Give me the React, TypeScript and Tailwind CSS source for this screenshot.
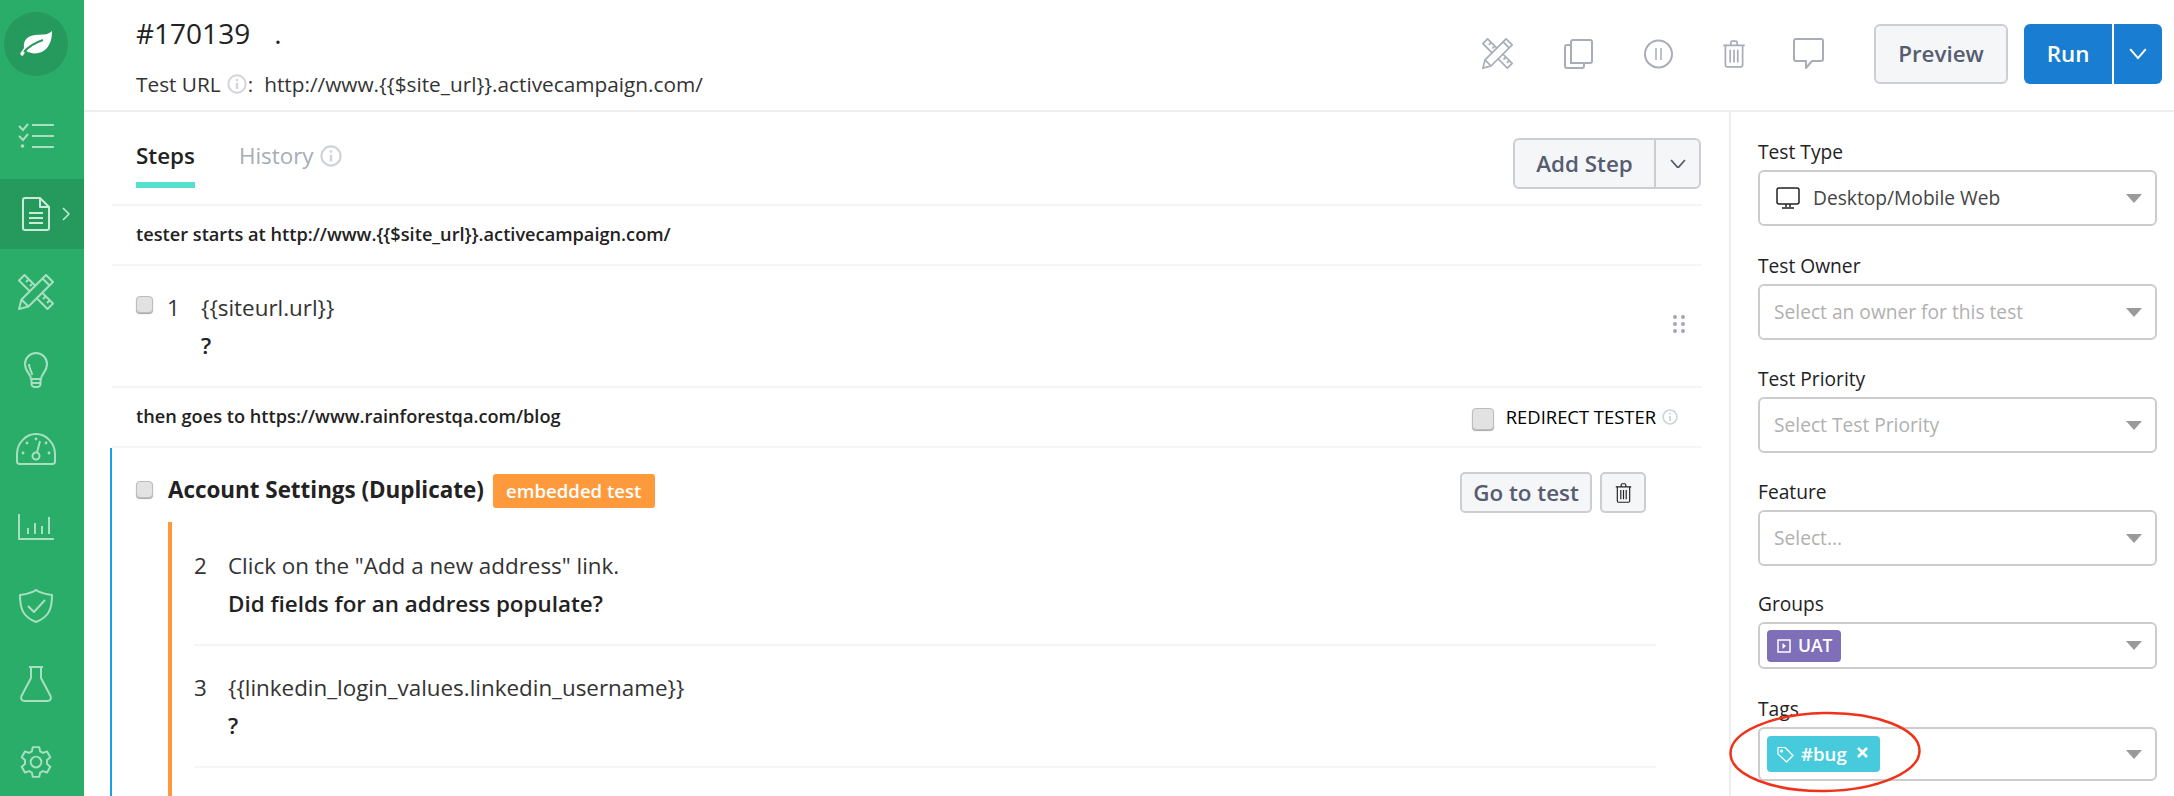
import type { ReactNode } from "react";

function InfoIcon({ size = 18 }: { size?: number }) {
  return (
    <svg width={size} height={size} viewBox="0 0 18 18" fill="none" className="shrink-0">
      <circle cx="9" cy="9" r="7.8" stroke="#d0d3da" strokeWidth="1.8" />
      <circle cx="9" cy="5.4" r="1.1" fill="#d0d3da" />
      <path d="M9 8v5.5" stroke="#d0d3da" strokeWidth="2" />
    </svg>
  );
}

function ToolsIcon({ size, color }: { size: number; color: string }) {
  return (
    <svg width={size} height={size} viewBox="0 0 36 36" fill="none" stroke={color} strokeWidth="2" strokeLinejoin="round">
      <path d="M17.25 11.75L6.5 1L1 6.5L11.75 17.25" />
      <path d="M24.25 18.75L35 29.5L29.5 35L18.75 24.25" />
      <path d="M28 1L35 8L10.5 32.5L1 35L3.5 25.5Z" />
      <path d="M24.5 4.5L31.5 11.5M3.5 25.5L10.5 32.5" />
      <path d="M8 8l3-3M12 12l2-2M25 25l3-3M29 29l3-3" />
    </svg>
  );
}

function TrashIcon({ w, h, color, sw = 2 }: { w: number; h: number; color: string; sw?: number }) {
  return (
    <svg width={w} height={h} viewBox="0 0 22 26" fill="none" stroke={color} strokeWidth={sw} strokeLinejoin="round">
      <path d="M1 5h20M8 5V2.500C8 1.700 8.700 1 9.500 1h3c.8 0 1.500.7 1.500 1.500V5" />
      <path d="M3 5v18.500C3 24.400 3.700 25 4.500 25h13c.8 0 1.500-.6 1.500-1.500V5" />
      <path d="M7.500 9v12M11 9v12M14.500 9v12" />
    </svg>
  );
}

function Caret() {
  return (
    <svg width="16" height="9" viewBox="0 0 16 9" className="shrink-0">
      <path d="M0 0h16L8 9z" fill="#9a9a9a" />
    </svg>
  );
}

function Chevron({ color, size = 16 }: { color: string; size?: number }) {
  return (
    <svg width={size} height={size * 0.62} viewBox="0 0 16 10" fill="none" stroke={color} strokeWidth="1.800">
      <path d="M1 1l7 8 7-8" />
    </svg>
  );
}

function Checkbox({ size = 17 }: { size?: number }) {
  return (
    <span
      className="block shrink-0 rounded-[4px] border border-[#bdbdbd] bg-[#e2e2e2] shadow-[0_1px_1px_rgba(0,0,0,0.35)]"
      style={{ width: size, height: size }}
    />
  );
}

const navIcon = "#a9dfc1";

const navItems: { icon: ReactNode; active?: boolean }[] = [
  {
    icon: (
      <svg width="36" height="25" viewBox="0 0 36 25" fill="none" stroke={navIcon} strokeWidth="2">
        <path d="M14 2h22M14 13h22M14 24h22" />
        <path d="M1 3l4 4 5-6M1 13l4 4 5-6" />
        <circle cx="4.500" cy="23" r="1.800" fill={navIcon} stroke="none" />
      </svg>
    ),
  },
  {
    active: true,
    icon: (
      <svg width="28" height="34" viewBox="0 0 28 34" fill="none" stroke="#c9ecd8" strokeWidth="2" strokeLinejoin="round">
        <path d="M18 1H3C2 1 1 2 1 3v28c0 1 1 2 2 2h22c1 0 2-1 2-2V10z" />
        <path d="M18 1v9h9" />
        <path d="M7 16h14M7 21h14M7 26h14" />
      </svg>
    ),
  },
  { icon: <ToolsIcon size={36} color={navIcon} /> },
  {
    icon: (
      <svg width="24" height="36" viewBox="0 0 24 36" fill="none" stroke={navIcon} strokeWidth="2">
        <path d="M7 27c0-5-6-7-6-15C1 6 6 1 12 1s11 5 11 11c0 8-6 10-6 15z" />
        <path d="M8 23c0-4-3-6-3-11" />
        <path d="M7.500 27v5c0 1.500 1.500 3 3 3h3c1.500 0 3-1.500 3-3v-5M7.500 31h9" />
      </svg>
    ),
  },
  {
    icon: (
      <svg width="40" height="32" viewBox="0 0 40 32" fill="none" stroke={navIcon} strokeWidth="2">
        <path d="M4 31C2.500 31 1 30 1 28.500V21C1 10.500 9.500 1 20 1s19 9.500 19 20v7.500c0 1.500-1.500 2.500-3 2.500z" />
        <circle cx="20" cy="23" r="3.500" />
        <path d="M21 19.500L24 8" />
        <circle cx="7" cy="20" r="1.400" fill={navIcon} stroke="none" />
        <circle cx="11" cy="10" r="1.400" fill={navIcon} stroke="none" />
        <circle cx="20" cy="6" r="1.400" fill={navIcon} stroke="none" />
        <circle cx="30" cy="10" r="1.400" fill={navIcon} stroke="none" />
        <circle cx="33" cy="20" r="1.400" fill={navIcon} stroke="none" />
      </svg>
    ),
  },
  {
    icon: (
      <svg width="36" height="26" viewBox="0 0 36 26" fill="none" stroke={navIcon} strokeWidth="2">
        <path d="M1 0v25h35" />
        <path d="M10 14v6M17 9v11M24 12v8M31 3v17" />
      </svg>
    ),
  },
  {
    icon: (
      <svg width="34" height="34" viewBox="0 0 34 34" fill="none" stroke={navIcon} strokeWidth="2" strokeLinejoin="round">
        <path d="M17 1c4 3 9 4 16 5 0 14-3 22-16 27C4 28 1 20 1 6c7-1 12-2 16-5z" />
        <path d="M9 17l6 6 11-12" />
      </svg>
    ),
  },
  {
    icon: (
      <svg width="32" height="36" viewBox="0 0 32 36" fill="none" stroke={navIcon} strokeWidth="2" strokeLinejoin="round">
        <path d="M9 1h14M11 1v11L1.500 30c-1 2.500 0 5 3 5h23c3 0 4-2.500 3-5L21 12V1" />
      </svg>
    ),
  },
  {
    icon: (
      <svg width="34" height="36" viewBox="0 0 24 24" fill="none" stroke={navIcon} strokeWidth="1.400" strokeLinejoin="round">
        <path d="M9.700 1.500h4.600l.6 3 2 1.100 2.900-1 2.300 4-2.300 2v2.800l2.300 2-2.300 4-2.900-1-2 1.100-.6 3H9.700l-.6-3-2-1.100-2.900 1-2.300-4 2.300-2v-2.800l-2.300-2 2.300-4 2.900 1 2-1.100z" />
        <circle cx="12" cy="12" r="3.800" />
      </svg>
    ),
  },
];

function Sidebar() {
  return (
    <aside className="w-[84px] shrink-0 bg-[#2aad69]">
      <div className="h-[96px] pl-[4px] pt-[12px]">
        <div className="flex h-[64px] w-[64px] items-center justify-center rounded-full bg-[#26995d]">
          <svg width="33" height="26" viewBox="0 0 33 26">
            <path d="M32 0c-5 5-10 3-17 4C7 5 3 10 4 17l-3.500 5c-.8 1.500 1 3.300 2.500 2.500L6 20c7 4 16 3 21-3 4-5 5-11 5-17z" fill="#fff" />
            <path d="M4 21C9 15 14 12 23 9" stroke="#26995d" strokeWidth="2" fill="none" />
          </svg>
        </div>
      </div>
      {navItems.map((item, i) => (
        <div key={i} className="flex h-[78.4px] items-center">
          <div className={item.active ? "relative flex h-[70px] w-full items-center bg-[#26995d]" : "flex h-[70px] w-full items-center"}>
            <div className="flex w-[72px] justify-center">{item.icon}</div>
            {item.active && (
              <svg width="8" height="14" viewBox="0 0 8 14" fill="none" stroke="#c9ecd8" strokeWidth="1.500" className="ml-[-10px]">
                <path d="M1 1l6 6-6 6" />
              </svg>
            )}
          </div>
        </div>
      ))}
    </aside>
  );
}

function Header() {
  return (
    <header className="flex h-[112px] shrink-0 items-start justify-between border-b-2 border-[#eeeeee] pl-[52px] pr-[12px]">
      <div className="pt-[13px] text-[#333]">
        <h1 className="h-[40px] text-[28px] leading-[40px] text-[#222]">
          #170139<span className="ml-[24px]">.</span>
        </h1>
        <p className="mt-[17px] flex items-center text-[20.8px] leading-[28px] text-[#333]">
          Test URL
          <span className="ml-[6px]"><InfoIcon size={20} /></span>
          <span className="ml-[1px]">:</span>
          <span className="ml-[11px]">http://www.{"{{$site_url}}"}.activecampaign.com/</span>
        </p>
      </div>
      <div className="flex items-start pt-[24px]">
        <div className="flex items-center pt-[14px]">
          <ToolsIcon size={31} color="#a8adb8" />
          <svg width="29" height="30" viewBox="0 0 29 30" fill="none" stroke="#a8adb8" strokeWidth="2" className="ml-[51px]">
            <path d="M7 24V3c0-1 1-2 2-2h17c1 0 2 1 2 2v19c0 1-1 2-2 2z" />
            <path d="M7 6H3C2 6 1 7 1 8v19c0 1 1 2 2 2h15c1 0 2-1 2-2v-3" />
          </svg>
          <svg width="29" height="30" viewBox="0 0 29 30" fill="none" stroke="#a8adb8" strokeWidth="2" className="ml-[51px]">
            <circle cx="14.500" cy="15" r="13.500" />
            <path d="M12 9v12M17 9v12" strokeWidth="1.500" />
          </svg>
          <span className="ml-[49px]"><TrashIcon w={24} h={28} color="#a8adb8" sw={1.600} /></span>
          <svg width="31" height="31" viewBox="0 0 31 31" fill="none" stroke="#a8adb8" strokeWidth="2" strokeLinejoin="round" className="ml-[47px]">
            <path d="M3 1h25c1 0 2 1 2 2v18c0 1-1 2-2 2H19l-6 7v-7H3c-1 0-2-1-2-2V3c0-1 1-2 2-2z" />
          </svg>
        </div>
        <button className="ml-[50px] h-[60px] w-[134px] rounded-[6px] border-2 border-[#ccced4] bg-[#f5f6f8] text-[22.4px] font-semibold text-[#565d70]">
          Preview
        </button>
        <div className="ml-[16px] flex h-[60px] w-[138px] overflow-hidden rounded-[6px] bg-[#197dd1] text-white">
          <span className="flex w-[88px] items-center justify-center text-[22.4px] font-semibold">Run</span>
          <span className="flex flex-1 items-center justify-center border-l-2 border-white">
            <Chevron color="#ffffff" size={18} />
          </span>
        </div>
      </div>
    </header>
  );
}

function Step({ n, text, question, tall }: { n: number; text: string; question: string; tall?: boolean }) {
  return (
    <div className={tall ? "flex h-[124px] border-b-2 border-[#f5f5f5] pt-[30px]" : "flex h-[122px] border-b-2 border-[#f5f5f5] pt-[28px]"}>
      <StepBody n={n} text={text} question={question} />
    </div>
  );
}

function StepBody({ n, text, question }: { n: number; text: string; question: string }) {
  return (
    <>
      <span className="w-[34px] text-[22.4px] leading-[28px] text-[#333]">{n}</span>
      <div>
        <p className="text-[22.4px] leading-[28px] text-[#333]">{text}</p>
        <p className="mt-[10px] text-[22.4px] font-semibold leading-[28px] text-[#222]">{question}</p>
      </div>
    </>
  );
}

function Steps() {
  return (
    <section className="min-w-0 flex-1 pr-[27px]">
      <div className="ml-[28px]">
        <div className="flex h-[94px] items-start justify-between border-b-2 border-[#f5f5f5] pl-[24px] pr-[1px]">
          <div className="flex items-start pt-[28px]">
            <div className="border-b-[6px] border-[#56e0d0] pb-[10px] text-[22.4px] font-semibold leading-[32px] text-[#222]">Steps</div>
            <div className="ml-[44px] flex items-center gap-[6px] text-[22.4px] leading-[32px] text-[#a7acb9]">
              History <InfoIcon size={22} />
            </div>
          </div>
          <div className="mt-[26px] flex h-[51px] w-[188px] rounded-[6px] border-2 border-[#ccced4] bg-[#f5f6f8] text-[#565d70]">
            <span className="flex w-[141px] items-center justify-center border-r-2 border-[#ccced4] text-[22.4px] font-semibold">Add Step</span>
            <span className="flex flex-1 items-center justify-center"><Chevron color="#565d70" /></span>
          </div>
        </div>
        <div className="flex h-[60px] items-center border-b-2 border-[#f5f5f5] pl-[24px] text-[18.2px] font-semibold text-[#222]">
          tester starts at http://www.{"{{$site_url}}"}.activecampaign.com/
        </div>
        <div className="flex h-[122px] items-start justify-between border-b-2 border-[#f5f5f5] pl-[24px] pr-[17px] pt-[28px]">
          <div className="flex items-start">
            <span className="mt-[2px]"><Checkbox /></span>
            <div className="ml-[14px] flex"><StepBody n={1} text={"{{siteurl.url}}"} question="?" /></div>
          </div>
          <svg width="12" height="18" viewBox="0 0 12 18" fill="#a2a7b4" className="mt-[21px]">
            <circle cx="2" cy="2" r="2" /><circle cx="10" cy="2" r="2" />
            <circle cx="2" cy="9" r="2" /><circle cx="10" cy="9" r="2" />
            <circle cx="2" cy="16" r="2" /><circle cx="10" cy="16" r="2" />
          </svg>
        </div>
        <div className="flex h-[60px] items-center justify-between border-b-2 border-[#f5f5f5] pl-[24px] pr-[24px] text-[18.2px] font-semibold text-[#222]">
          then goes to https://www.rainforestqa.com/blog
          <div className="flex items-center">
            <span className="mt-[5px]"><Checkbox size={22} /></span>
            <span className="ml-[12px] mr-[6px] text-[18.4px] font-medium text-[#000]">REDIRECT TESTER</span>
            <InfoIcon size={16} />
          </div>
        </div>
      </div>
      <div className="ml-[26px] h-[350px] border-l-2 border-[#1a9fe0] pl-[24px] pr-[46px]">
        <div className="flex h-[74px] items-start justify-between">
          <div className="flex items-start pt-[26px]">
            <span className="mt-[7px]"><Checkbox /></span>
            <span className="ml-[15px] text-[22.4px] font-bold leading-[32px] text-[#222]">Account Settings (Duplicate)</span>
            <span className="ml-[9px] flex h-[34px] w-[162px] items-center justify-center rounded-[3px] bg-[#ff9a3c] text-[18.6px] font-semibold text-white">embedded test</span>
          </div>
          <div className="mr-[10px] flex gap-[8px] pt-[24px]">
            <button className="h-[41px] w-[132px] rounded-[5px] border-2 border-[#ccced4] bg-[#f5f6f8] text-[22.4px] font-semibold text-[#565d70]">Go to test</button>
            <button className="flex h-[41px] w-[46px] items-center justify-center rounded-[5px] border-2 border-[#ccced4] bg-[#f5f6f8]">
              <TrashIcon w={17} h={22} color="#222" sw={1.500} />
            </button>
          </div>
        </div>
        <div className="ml-[32px] h-[274px] border-l-[4px] border-[#ff9a3c] pl-[22px]">
          <Step tall n={2} text={'Click on the "Add a new address" link.'} question="Did fields for an address populate?" />
          <Step n={3} text={"{{linkedin_login_values.linkedin_username}}"} question="?" />
        </div>
      </div>
    </section>
  );
}

function Field({ label, h, top = 0, children }: { label: string; h: number; top?: number; children?: ReactNode }) {
  return (
    <div>
      <div className="text-[19.2px] font-medium leading-[22px] text-[#222]" style={{ marginTop: top }}>{label}</div>
      <div className="mt-[7px] flex items-center justify-between rounded-[6px] border-2 border-[#ccc] pl-[7px] pr-[13px]" style={{ height: h }}>
        <div className="flex min-w-0 items-center">{children}</div>
        <Caret />
      </div>
    </div>
  );
}

function Placeholder({ children }: { children: ReactNode }) {
  return <span className="pl-[7px] text-[19.2px] text-[#b0b0b0]">{children}</span>;
}

function Panel() {
  return (
    <section className="relative w-[445px] shrink-0 border-l-2 border-[#eeeeee] pl-[27px] pr-[17px] pt-[29px]">
      <Field label="Test Type" h={56}>
        <svg width="24" height="24" viewBox="0 0 24 24" fill="none" stroke="#222" strokeWidth="1.500" className="ml-[9px]">
          <rect x="1" y="2" width="22" height="16" rx="2" />
          <path d="M10 18v3M14 18v3M6 22h12" />
        </svg>
        <span className="ml-[13px] text-[19.2px] text-[#444]">Desktop/Mobile Web</span>
      </Field>
      <Field label="Test Owner" h={56} top={29}><Placeholder>Select an owner for this test</Placeholder></Field>
      <Field label="Test Priority" h={56} top={28}><Placeholder>Select Test Priority</Placeholder></Field>
      <Field label="Feature" h={56} top={28}><Placeholder>Select...</Placeholder></Field>
      <Field label="Groups" h={47} top={27}>
        <span className="flex h-[32px] w-[74px] items-center rounded-[4px] bg-[#7f6fb8] pl-[10px] text-[17.500px] font-semibold text-white">
          <svg width="14" height="14" viewBox="0 0 14 14" fill="none" className="mr-[7px] shrink-0">
            <rect x="1" y="1" width="12" height="12" stroke="#fff" strokeWidth="1.500" />
            <path d="M5.500 4l3.500 3-3.500 3z" fill="#fff" />
          </svg>
          UAT
        </span>
      </Field>
      <Field label="Tags" h={54} top={29}>
        <span className="flex h-[36px] w-[113px] items-center rounded-[4px] bg-[#47cbdc] pl-[10px] text-[18.6px] font-semibold text-white">
          <svg width="17" height="17" viewBox="0 0 17 17" fill="none" stroke="#fff" strokeWidth="1.200" strokeLinejoin="round" className="shrink-0">
            <path d="M1 1.500h7L16 9.500l-6.500 6.500L1 8z" />
            <circle cx="4.500" cy="5" r="1" />
          </svg>
          <span className="ml-[7px]">#bug</span>
          <svg width="11" height="11" viewBox="0 0 11 11" stroke="#fff" strokeWidth="2.600" className="ml-[10px] mt-[-4px]">
            <path d="M1 1l9 9M10 1l-9 9" />
          </svg>
        </span>
      </Field>
      <svg width="195" height="84" viewBox="0 0 195 84" fill="none" className="absolute left-[-3px] top-[598px]">
        <ellipse cx="97" cy="42" rx="94.500" ry="39" stroke="#f0321a" strokeWidth="2.500" transform="rotate(-1 97 42)" />
      </svg>
    </section>
  );
}

export default function App() {
  return (
    <div className="flex h-[796px] w-[2174px] overflow-hidden bg-white font-['Open_Sans',sans-serif]">
      <Sidebar />
      <main className="flex min-w-0 flex-1 flex-col">
        <Header />
        <div className="flex min-h-0 flex-1">
          <Steps />
          <Panel />
        </div>
      </main>
    </div>
  );
}
